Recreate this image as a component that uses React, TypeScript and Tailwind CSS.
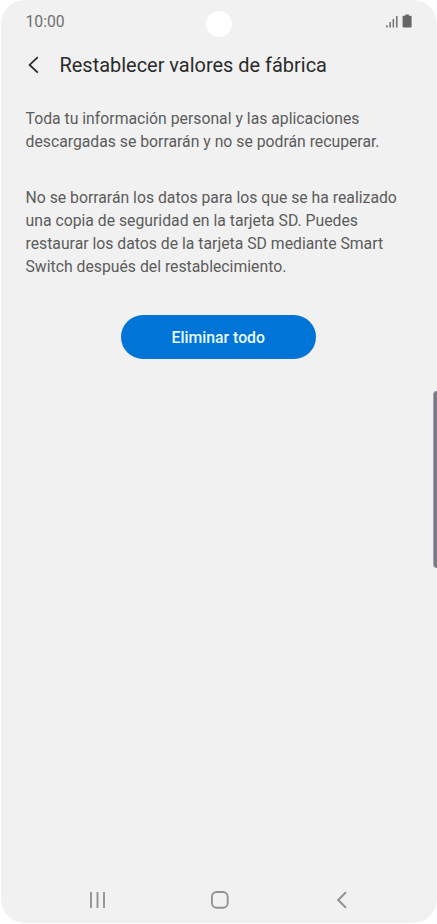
export default function App() {
  return (
    <div className="relative h-[924px] w-[437px] overflow-hidden bg-white font-[Roboto,sans-serif]">
      <div className="relative ml-px flex h-[923px] flex-col rounded-[24px] bg-[#f1f1f1]">
        <div className="absolute top-[11px] left-[205px] size-[26px] rounded-full bg-white" />
        <header className="flex h-[44px] items-center justify-between pr-[25px] pl-[24.5px] text-[15.75px] text-[#707070]">
          <span>10:00</span>
          <svg width="27" height="14" viewBox="0 0 27 14" className="mt-[-2px]">
            <path d="M1.2 11.2h1.5v2.3H1.2zM4.4 8h1.5v5.5H4.4zM7.6 5h1.5v8.5H7.6zM11 2h1.5v11.5H11z" fill="#707070" />
            <path d="M18.6 1.7h1.7V.5h3.6v1.2h1.7q1 0 1 1v9.8q0 1-1 1h-7q-1 0-1-1V2.7q0-1 1-1z" fill="#666" />
          </svg>
        </header>
        <div className="flex h-[42px] items-center pl-[26px]">
          <svg width="13" height="18" viewBox="0 0 13 18" fill="none" stroke="#2b2b2b" strokeWidth="1.8" className="mt-[-1px]">
            <path d="M10.8 1.2L2.6 8.9l8.2 7.7" />
          </svg>
          <h1 className="mt-[1.5px] ml-[19.5px] text-[19.95px] text-[#2b2b2b]">Restablecer valores de fábrica</h1>
        </div>
        <main className="flex flex-1 flex-col pt-[21px] pl-[24.5px] text-[15.77px] leading-[23px] text-[#5c5c5c]">
          <p>Toda tu información personal y las aplicaciones<br />descargadas se borrarán y no se podrán recuperar.</p>
          <p className="mt-[33px]">No se borrarán los datos para los que se ha realizado<br />una copia de seguridad en la tarjeta SD. Puedes<br />restaurar los datos de la tarjeta SD mediante Smart<br />Switch después del restablecimiento.</p>
          <button className="mt-[36.8px] ml-[95px] h-[44.5px] w-[195.5px] rounded-full bg-[#0074d7] text-[15.8px] font-medium text-[#e6fbff]">Eliminar todo</button>
        </main>
        <nav className="flex h-[46px] items-center justify-between pr-[89px] pl-[88px]">
          <svg width="17" height="18" viewBox="0 0 17 18" stroke="#929292" strokeWidth="1.9">
            <path d="M2 1v16M8.5 1v16M15 1v16" />
          </svg>
          <svg width="20" height="20" viewBox="0 0 20 20" fill="none" stroke="#929292" strokeWidth="1.9" className="ml-[-2px]">
            <rect x="1.9" y="2" width="15.8" height="15.8" rx="4.8" />
          </svg>
          <svg width="12" height="18" viewBox="0 0 12 18" fill="none" stroke="#929292" strokeWidth="2">
            <path d="M10 1.2L2.2 9l7.8 7.8" />
          </svg>
        </nav>
      </div>
      <div className="absolute top-[391px] right-0 h-[177px] w-[4px] rounded-l-[4px] border-l border-[#a5a4ac] bg-[#7b7986]" />
    </div>
  );
}
